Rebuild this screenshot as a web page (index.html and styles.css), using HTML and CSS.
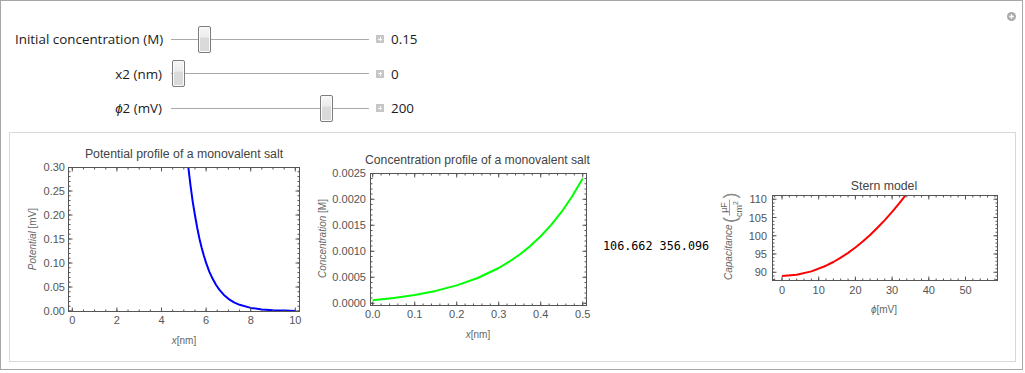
FILE: index.html
```html
<!DOCTYPE html>
<html lang="en">
<head>
  <meta charset="UTF-8" />
  <title>Double layer</title>
  <link rel="stylesheet" href="styles.css">
</head>
<body>
  <div class="frame">
    <svg class="corner-btn" width="9" height="9" viewBox="0 0 9 9">
      <circle cx="4.5" cy="4.5" r="4.5" fill="#aaa" />
      <path d="M2.2 4.5h4.6M4.5 2.2v4.6" stroke="#fff" stroke-width="1.4" />
    </svg>

    <div class="controls">
      <div class="label">Initial concentration (M)</div>
      <div class="slider"><span class="thumb" style="left:27px"></span></div>
      <span class="step"></span>
      <div class="value">0.15</div>

      <div class="label">x2 (nm)</div>
      <div class="slider"><span class="thumb" style="left:1px"></span></div>
      <span class="step"></span>
      <div class="value">0</div>

      <div class="label"><i>ϕ</i>2 (mV)</div>
      <div class="slider"><span class="thumb" style="left:149px"></span></div>
      <span class="step"></span>
      <div class="value">200</div>
    </div>

    <div class="panel">
      <!-- potential profile -->
      <svg class="plot" width="290" height="205" viewBox="20 143 290 205">
        <defs><clipPath id="c1"><rect x="68.5" y="167.5" width="231" height="144" /></clipPath></defs>
        <text class="title" x="184" y="158" text-anchor="middle">Potential profile of a monovalent salt</text>
        <polyline class="curve" stroke="#0000ff" clip-path="url(#c1)"
          points="187.1,157 188.3,167 190.5,185.4 192.7,201.6 195,215.5 197.2,227.8 199.4,238.5 201.6,247.6 203.9,255.8 206.1,262.9 209.4,271.8 212.8,279.1 216.1,285 219.5,289.8 223.9,294.9 228.4,298.8 234,302.4 239.6,304.8 250.7,307.9 261.9,309.4 273,310.2 284.2,310.6 295.3,311" />
        <rect class="box" x="68.5" y="167.5" width="231" height="144" />
        <line class="tk" x1="71.8" y1="309.5" x2="300" y2="309.5" stroke-width="4" stroke-dasharray="1 43.6" />
        <line class="tk" x1="71.8" y1="169.5" x2="300" y2="169.5" stroke-width="4" stroke-dasharray="1 43.6" />
        <line class="tk" x1="71.8" y1="310.5" x2="300" y2="310.5" stroke-width="2" stroke-dasharray="1 10.15" />
        <line class="tk" x1="71.8" y1="168.5" x2="300" y2="168.5" stroke-width="2" stroke-dasharray="1 10.15" />
        <line class="tk" x1="70.5" y1="311.5" x2="70.5" y2="167" stroke-width="4" stroke-dasharray="1 23" />
        <line class="tk" x1="297.5" y1="311.5" x2="297.5" y2="167" stroke-width="4" stroke-dasharray="1 23" />
        <line class="tk" x1="69.5" y1="311.5" x2="69.5" y2="167" stroke-width="2" stroke-dasharray="1 3.8" />
        <line class="tk" x1="298.5" y1="311.5" x2="298.5" y2="167" stroke-width="2" stroke-dasharray="1 3.8" />
        <g class="num" text-anchor="middle">
          <text x="72.3" y="324">0</text>
          <text x="116.9" y="324">2</text>
          <text x="161.5" y="324">4</text>
          <text x="206.1" y="324">6</text>
          <text x="250.7" y="324">8</text>
          <text x="295.3" y="324">10</text>
        </g>
        <g class="num" text-anchor="end">
          <text x="65" y="315">0.00</text>
          <text x="65" y="291">0.05</text>
          <text x="65" y="267">0.10</text>
          <text x="65" y="243">0.15</text>
          <text x="65" y="219">0.20</text>
          <text x="65" y="195">0.25</text>
          <text x="65" y="171">0.30</text>
        </g>
        <text class="axis" x="184" y="344" text-anchor="middle"><tspan font-style="italic">x</tspan>[nm]</text>
        <text class="axis" transform="translate(35.5 239) rotate(-90)" text-anchor="middle"><tspan font-style="italic">Potential</tspan> [mV]</text>
      </svg>

      <!-- concentration profile -->
      <svg class="plot" width="290" height="205" viewBox="310 143 290 205">
        <defs><clipPath id="c2"><rect x="370.5" y="173.5" width="216" height="132" /></clipPath></defs>
        <text class="title title-wide" x="477.5" y="164" text-anchor="middle">Concentration profile of a monovalent salt</text>
        <polyline class="curve" stroke="#00ff00" clip-path="url(#c2)"
          points="372.7,300.2 393.7,297.9 414.7,294.9 435.7,290.9 456.7,285.4 477.7,278 498.7,268 509.2,261.7 519.7,254.5 530.2,246.1 540.7,236.2 551.2,224.9 561.7,211.7 572.2,196.3 582.7,178.5" />
        <rect class="box" x="370.5" y="173.5" width="216" height="132" />
        <line class="tk" x1="372.2" y1="303.5" x2="587" y2="303.5" stroke-width="4" stroke-dasharray="1 41" />
        <line class="tk" x1="372.2" y1="175.5" x2="587" y2="175.5" stroke-width="4" stroke-dasharray="1 41" />
        <line class="tk" x1="372.2" y1="304.5" x2="587" y2="304.5" stroke-width="2" stroke-dasharray="1 7.4" />
        <line class="tk" x1="372.2" y1="174.5" x2="587" y2="174.5" stroke-width="2" stroke-dasharray="1 7.4" />
        <line class="tk" x1="372.5" y1="303.8" x2="372.5" y2="173" stroke-width="4" stroke-dasharray="1 25" />
        <line class="tk" x1="584.5" y1="303.8" x2="584.5" y2="173" stroke-width="4" stroke-dasharray="1 25" />
        <line class="tk" x1="371.5" y1="303.8" x2="371.5" y2="173" stroke-width="2" stroke-dasharray="1 4.2" />
        <line class="tk" x1="585.5" y1="303.8" x2="585.5" y2="173" stroke-width="2" stroke-dasharray="1 4.2" />
        <g class="num" text-anchor="middle">
          <text x="372.7" y="318">0.0</text>
          <text x="414.7" y="318">0.1</text>
          <text x="456.7" y="318">0.2</text>
          <text x="498.7" y="318">0.3</text>
          <text x="540.7" y="318">0.4</text>
          <text x="582.7" y="318">0.5</text>
        </g>
        <g class="num" text-anchor="end">
          <text x="366" y="307.3">0.0000</text>
          <text x="366" y="281.3">0.0005</text>
          <text x="366" y="255.3">0.0010</text>
          <text x="366" y="229.3">0.0015</text>
          <text x="366" y="203.3">0.0020</text>
          <text x="366" y="177.3">0.0025</text>
        </g>
        <text class="axis" x="478" y="338" text-anchor="middle"><tspan font-style="italic">x</tspan>[nm]</text>
        <text class="axis" transform="translate(325.5 238.5) rotate(-90)" text-anchor="middle"><tspan font-style="italic">Concentration</tspan> [M]</text>
      </svg>

      <div class="result">106.662 356.096</div>

      <!-- stern model -->
      <svg class="plot" width="290" height="205" viewBox="715 143 290 205">
        <defs><clipPath id="c3"><rect x="772.5" y="195.5" width="225" height="85" /></clipPath></defs>
        <text class="title" x="884" y="190" text-anchor="middle">Stern model</text>
        <polyline class="curve" stroke="#ff0000" clip-path="url(#c3)"
          points="782,275.95 796.7,274.8 811.4,271.4 826,265.7 833.4,262 840.7,257.7 848.1,252.9 855.4,247.5 862.7,241.5 870.1,235 877.4,227.8 884.8,220.1 892.1,211.9 899.4,203.1 906.4,194.2" />
        <rect class="box" x="772.5" y="195.5" width="225" height="85" />
        <line class="tk" x1="781.5" y1="278.5" x2="998" y2="278.5" stroke-width="4" stroke-dasharray="1 35.7" />
        <line class="tk" x1="781.5" y1="197.5" x2="998" y2="197.5" stroke-width="4" stroke-dasharray="1 35.7" />
        <line class="tk" x1="774.16" y1="279.5" x2="998" y2="279.5" stroke-width="2" stroke-dasharray="1 6.34" />
        <line class="tk" x1="774.16" y1="196.5" x2="998" y2="196.5" stroke-width="2" stroke-dasharray="1 6.34" />
        <line class="tk" x1="774.5" y1="272.8" x2="774.5" y2="195" stroke-width="4" stroke-dasharray="1 17.25" />
        <line class="tk" x1="995.5" y1="272.8" x2="995.5" y2="195" stroke-width="4" stroke-dasharray="1 17.25" />
        <line class="tk" x1="773.5" y1="280.1" x2="773.5" y2="195" stroke-width="2" stroke-dasharray="1 2.65" />
        <line class="tk" x1="996.5" y1="280.1" x2="996.5" y2="195" stroke-width="2" stroke-dasharray="1 2.65" />
        <g class="num" text-anchor="middle">
          <text x="782" y="294">0</text>
          <text x="818.7" y="294">10</text>
          <text x="855.4" y="294">20</text>
          <text x="892.1" y="294">30</text>
          <text x="928.8" y="294">40</text>
          <text x="965.5" y="294">50</text>
        </g>
        <g class="num" text-anchor="end">
          <text x="767" y="276.3">90</text>
          <text x="767" y="258">95</text>
          <text x="767" y="239.8">100</text>
          <text x="767" y="221.5">105</text>
          <text x="767" y="203.3">110</text>
        </g>
        <text class="axis" x="884" y="313" text-anchor="middle"><tspan font-style="italic">ϕ</tspan>[mV]</text>
        <g class="axis" transform="translate(732 238) rotate(-90)">
          <text x="-42" y="0" font-style="italic">Capacitance</text>
          <text class="paren" x="15" y="4">(</text>
          <text class="frac" x="30.5" y="-5" text-anchor="middle">μF</text>
          <line x1="22.5" y1="-2.5" x2="38.5" y2="-2.5" stroke="#777" stroke-width="0.7" />
          <text class="frac" x="29" y="10" text-anchor="middle">cm<tspan class="sup" dy="-4">2</tspan></text>
          <text class="paren" x="39.5" y="4">)</text>
        </g>
      </svg>
    </div>
  </div>
</body>
</html>
```

FILE: styles.css
```css
* {
  box-sizing: border-box;
}

body {
  margin: 0;
  background: #fff;
  font-family: "Open Sans", sans-serif;
}

.frame {
  position: relative;
  width: 1023px;
  height: 370px;
  border: 1px solid #a6a6a6;
}

.corner-btn {
  position: absolute;
  top: 11px;
  left: 1006px;
}

.controls {
  display: grid;
  grid-template-columns: 147px 198px 8px auto;
  grid-auto-rows: 34.5px;
  align-items: center;
  padding: 21px 0 0 14px;
  font-size: 13.4px;
  color: #1b1b1b;
}

.label {
  text-align: right;
  white-space: nowrap;
}

.slider {
  position: relative;
  height: 27px;
  margin-left: 9px;
  margin-right: -9px;
}

.slider::before {
  content: "";
  position: absolute;
  left: 0;
  right: 0;
  top: 13px;
  height: 1px;
  background: #a9a9a9;
}

.thumb {
  position: absolute;
  top: 0;
  width: 13px;
  height: 27px;
  border: 1px solid #7c7c7c;
  border-radius: 2px;
  background: linear-gradient(#f6f6f6 0%, #ececec 40%, #dadada 45%, #d9d9d9 100%);
  box-shadow: inset 0 0 0 1px #fbfbfb;
}

.step {
  position: relative;
  width: 8px;
  height: 8px;
  margin-left: 16px;
  background: #c6c6c6;
}

.step::before,
.step::after {
  content: "";
  position: absolute;
  background: #fff;
}

.step::before {
  left: 2px;
  top: 3.5px;
  width: 4px;
  height: 1px;
}

.step::after {
  left: 3.5px;
  top: 2px;
  width: 1px;
  height: 4px;
}

.value {
  padding-left: 23px;
}

.panel {
  display: flex;
  align-items: center;
  height: 230px;
  margin: 6.5px 6px 0 8px;
  padding: 10px 0 13px 10px;
  border: 1px solid #d9d9d9;
}

.plot {
  display: block;
  flex: none;
}

.result {
  width: 115px;
  flex: none;
  padding-left: 3px;
  font-family: "DejaVu Sans Mono", monospace;
  font-size: 11.75px;
  color: #000;
  white-space: pre;
}

.plot text {
  font-family: "Liberation Sans", Arial, sans-serif;
}

.title {
  font-size: 12.3px;
  fill: #444;
}

.title-wide {
  font-size: 12.2px;
}

.num {
  font-size: 11px;
  fill: #555;
}

.axis {
  font-size: 10px;
  fill: #666;
}

.frac {
  font-size: 9px;
}

.sup {
  font-size: 7px;
}

.paren {
  font-size: 18px;
  fill: #888;
}

.box {
  fill: none;
  stroke: #555;
  stroke-width: 1;
}

.tk {
  stroke: #555;
}

.curve {
  fill: none;
  stroke-width: 2;
  stroke-linejoin: round;
}
```
